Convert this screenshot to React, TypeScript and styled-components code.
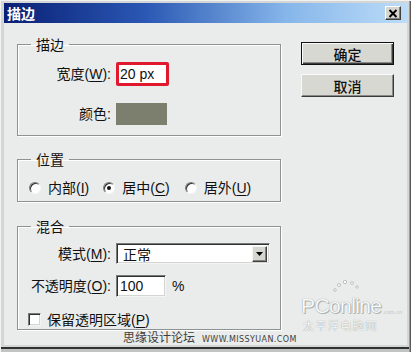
import React from "react";
import styled, { createGlobalStyle } from "styled-components";

const GlobalStyle = createGlobalStyle`
  html, body {
    margin: 0;
    padding: 0;
    background: #d6d9d8;
  }
  body {
    font-family: "Liberation Sans", "Noto Sans CJK SC", sans-serif;
    font-size: 14px;
    color: #111;
  }
`;

const Window = styled.div`
  position: relative;
  width: 411px;
  height: 352px;
  box-sizing: border-box;
  padding: 3px 4px 7px 4px;
  display: flex;
  flex-direction: column;
  background: #d3d6d5;
  box-shadow: inset 1px 1px 0 #f2f2f2, inset -1px 0 0 #5a5a5a, inset -2px 0 0 #9a9c9c,
    inset 0 -3px 0 #c2c4c4, inset 0 -5px 0 #303232;
  overflow: hidden;
`;

const TitleBar = styled.div`
  height: 20px;
  flex: none;
  display: flex;
  align-items: center;
  justify-content: space-between;
  padding: 0 6px 0 3px;
  background: linear-gradient(90deg, #0a1f74 0%, #2a58b4 35%, #86b6ea 70%, #bcdcf8 100%);
`;

const TitleText = styled.span`
  color: #fff;
  font-weight: bold;
  font-size: 14px;
  line-height: 20px;
  font-family: "Noto Sans CJK SC", sans-serif;
`;

const CloseButton = styled.div`
  width: 16px;
  height: 14px;
  box-sizing: border-box;
  display: flex;
  align-items: center;
  justify-content: center;
  background: #d6d6d0;
  border: 1px solid;
  border-color: #fff #404040 #404040 #fff;
  box-shadow: inset -1px -1px 0 #808080;
`;

const Body = styled.div`
  flex: 1;
  display: flex;
  padding: 13px 13px 15px 13px;
  background: #eaeceb;
`;

const LeftColumn = styled.div`
  width: 264px;
  display: flex;
  flex-direction: column;
`;

const RightColumn = styled.div`
  width: 93px;
  margin-left: 20px;
  margin-top: 6px;
  display: flex;
  flex-direction: column;
  gap: 9px;
`;

const Group = styled.fieldset<{ $pt: number; $pb: number; $mt?: number }>`
  margin: ${(p) => p.$mt ?? 0}px 0 0 0;
  padding: ${(p) => p.$pt}px 10px ${(p) => p.$pb}px 10px;
  border: 1px solid #8d9292;
  box-shadow: 1px 1px 0 #fff, inset 1px 1px 0 #fff;
  min-width: 0;
`;

const Legend = styled.legend`
  margin-left: 3px;
  padding: 0 5px;
  line-height: 16px;
  font-family: "Noto Sans CJK SC", sans-serif;
  font-size: 14px;
`;

const FormGrid = styled.div<{ $gap: number }>`
  display: grid;
  grid-template-columns: 83px auto;
  column-gap: 5px;
  row-gap: ${(p) => p.$gap}px;
  align-items: center;
  justify-items: start;
`;

const Label = styled.span`
  justify-self: end;
  white-space: nowrap;
  line-height: 18px;
  u {
    text-decoration-thickness: 1px;
    text-underline-offset: 2px;
  }
`;

const sunken = `
  box-sizing: border-box;
  background: #fff;
  border: 1px solid;
  border-color: #7a7a7a #f4f4f4 #f4f4f4 #7a7a7a;
  box-shadow: inset 1px 1px 0 #303030, inset -1px -1px 0 #d4d4d0;
`;

const HighlightedInput = styled.div`
  width: 53px;
  height: 24px;
  box-sizing: border-box;
  border: 3px solid #e0192e;
  border-radius: 2px;
  background: #fff;
  padding-left: 1px;
  line-height: 18px;
  font-size: 14px;
`;

const Swatch = styled.div`
  width: 51px;
  height: 22px;
  background: #7c7f6e;
`;

const TextInput = styled.div<{ $w: number }>`
  ${sunken}
  width: ${(p) => p.$w}px;
  height: 22px;
  padding-left: 3px;
  line-height: 20px;
`;

const SelectBox = styled.div`
  ${sunken}
  width: 154px;
  height: 21px;
  display: flex;
  align-items: center;
  justify-content: space-between;
  padding: 0 2px 0 6px;
  font-family: "Noto Sans CJK SC", sans-serif;
`;

const SelectArrow = styled.div`
  width: 15px;
  height: 16px;
  box-sizing: border-box;
  display: flex;
  align-items: center;
  justify-content: center;
  background: #d6d6d0;
  border: 1px solid;
  border-color: #f4f4f4 #404040 #404040 #f4f4f4;
  box-shadow: inset -1px -1px 0 #808080;
`;

const InlineRow = styled.div`
  display: flex;
  align-items: center;
  gap: 6px;
`;

const RadioRow = styled.div`
  display: flex;
  align-items: center;
  height: 18px;
  margin-left: 1px;
`;

const RadioItem = styled.label<{ $ml: number }>`
  display: flex;
  align-items: center;
  gap: 7px;
  margin-left: ${(p) => p.$ml}px;
  white-space: nowrap;
  line-height: 18px;
  u {
    text-underline-offset: 2px;
  }
`;

const RadioDot = styled.span<{ $checked?: boolean }>`
  position: relative;
  width: 12px;
  height: 12px;
  box-sizing: border-box;
  border-radius: 50%;
  background: #fff;
  border: 1px solid;
  border-color: #7a7a7a #f6f6f6 #f6f6f6 #7a7a7a;
  box-shadow: inset 1px 1px 0 #303030;
  &::after {
    content: "";
    display: ${(p) => (p.$checked ? "block" : "none")};
    position: absolute;
    left: 3px;
    top: 3px;
    width: 4px;
    height: 4px;
    border-radius: 50%;
    background: #111;
  }
`;

const CheckRow = styled.label`
  display: flex;
  align-items: center;
  gap: 6px;
  height: 16px;
  margin-top: 14px;
  white-space: nowrap;
  u {
    text-underline-offset: 2px;
  }
`;

const CheckBox = styled.span`
  ${sunken}
  width: 13px;
  height: 13px;
`;

const Button = styled.div<{ $default?: boolean }>`
  height: 23px;
  box-sizing: border-box;
  display: flex;
  align-items: center;
  justify-content: center;
  background: #d7d8d1;
  font-family: "Noto Sans CJK SC", sans-serif;
  font-size: 14px;
  font-weight: 500;
  border: 1px solid;
  border-color: ${(p) => (p.$default ? "#111 #111 #111 #111" : "#fafafa #3a3a3a #3a3a3a #fafafa")};
  box-shadow: ${(p) =>
    p.$default
      ? "inset 1px 1px 0 #fafafa, inset -1px -1px 0 #3a3a3a, inset -2px -2px 0 #8a8a8a"
      : "inset -1px -1px 0 #8a8a8a"};
`;

const Watermark = styled.div`
  position: absolute;
  left: 123px;
  top: 329px;
  display: flex;
  align-items: baseline;
  gap: 7px;
  color: #3e3e3e;
  white-space: nowrap;
`;

const WatermarkCn = styled.span`
  font-family: "Noto Sans CJK SC", sans-serif;
  font-size: 12px;
  line-height: 16px;
`;

const WatermarkUrl = styled.span`
  font-family: "DejaVu Sans", sans-serif;
  font-size: 8px;
  letter-spacing: 0.4px;
`;

const LogoMark = styled.div`
  position: absolute;
  left: 301px;
  top: 279px;
  width: 104px;
  display: flex;
  flex-direction: column;
  align-items: flex-start;
  gap: 2px;
  color: #f7f9f9;
  pointer-events: none;
`;

const LogoDots = styled.svg`
  margin-left: 30px;
  height: 14px;
  width: 30px;
`;

const LogoLine = styled.div`
  display: flex;
  align-items: flex-end;
  gap: 1px;
`;

const LogoWord = styled.span`
  font-family: "Liberation Sans", sans-serif;
  font-size: 21px;
  line-height: 22px;
  letter-spacing: -0.6px;
  text-shadow: 0 0 1px #7e8282, 1px 1px 0 #b4b8b8;
`;

const LogoCom = styled.span`
  font-family: "DejaVu Sans", sans-serif;
  font-size: 5px;
  line-height: 9px;
  color: #b8bcbc;
`;

const LogoCn = styled.span`
  font-family: "Noto Sans CJK SC", sans-serif;
  font-size: 11px;
  line-height: 13px;
  letter-spacing: 1.5px;
  margin-left: 2px;
  text-shadow: 0 0 1px #7e8282;
`;

export default function App() {
  return (
    <>
      <GlobalStyle />
      <Window>
        <TitleBar>
          <TitleText>描边</TitleText>
          <CloseButton>
            <svg width="10" height="9" viewBox="0 0 10 9">
              <path d="M1.5 1 L8.5 8 M8.5 1 L1.5 8" stroke="#000" strokeWidth="2" />
            </svg>
          </CloseButton>
        </TitleBar>
        <Body>
          <LeftColumn>
            <Group $pt={10} $pb={10}>
              <Legend>描边</Legend>
              <FormGrid $gap={17}>
                <Label>
                  宽度(<u>W</u>):
                </Label>
                <HighlightedInput>20 px</HighlightedInput>
                <Label>颜色:</Label>
                <Swatch />
              </FormGrid>
            </Group>

            <Group $pt={12} $pb={4} $mt={15}>
              <Legend>位置</Legend>
              <RadioRow>
                <RadioItem $ml={0}>
                  <RadioDot />
                  <span>
                    内部(<u>I</u>)
                  </span>
                </RadioItem>
                <RadioItem $ml={14}>
                  <RadioDot $checked />
                  <span>
                    居中(<u>C</u>)
                  </span>
                </RadioItem>
                <RadioItem $ml={15}>
                  <RadioDot />
                  <span>
                    居外(<u>U</u>)
                  </span>
                </RadioItem>
              </RadioRow>
            </Group>

            <Group $pt={9} $pb={2} $mt={16}>
              <Legend>混合</Legend>
              <FormGrid $gap={11}>
                <Label>
                  模式(<u>M</u>):
                </Label>
                <SelectBox>
                  <span>正常</span>
                  <SelectArrow>
                    <svg width="7" height="4" viewBox="0 0 7 4">
                      <polygon points="0,0 7,0 3.5,4" fill="#000" />
                    </svg>
                  </SelectArrow>
                </SelectBox>
                <Label>
                  不透明度(<u>O</u>):
                </Label>
                <InlineRow>
                  <TextInput $w={50}>100</TextInput>
                  <span>%</span>
                </InlineRow>
              </FormGrid>
              <CheckRow>
                <CheckBox />
                <span>
                  保留透明区域(<u>P</u>)
                </span>
              </CheckRow>
            </Group>
          </LeftColumn>

          <RightColumn>
            <Button $default>确定</Button>
            <Button>取消</Button>
          </RightColumn>
        </Body>

        <LogoMark>
          <LogoDots viewBox="0 0 30 14">
            <circle cx="4" cy="11" r="1.3" fill="#fff" stroke="#9a9e9e" strokeWidth="0.6" />
            <circle cx="8" cy="6" r="1.5" fill="#fff" stroke="#9a9e9e" strokeWidth="0.6" />
            <circle cx="14" cy="3" r="1.7" fill="#fff" stroke="#9a9e9e" strokeWidth="0.6" />
            <circle cx="21" cy="4" r="1.4" fill="#fff" stroke="#9a9e9e" strokeWidth="0.6" />
            <circle cx="26" cy="8" r="1.2" fill="#fff" stroke="#9a9e9e" strokeWidth="0.6" />
          </LogoDots>
          <LogoLine>
            <LogoWord>PConline</LogoWord>
            <LogoCom>.com.cn</LogoCom>
          </LogoLine>
          <LogoCn>太平洋电脑网</LogoCn>
        </LogoMark>
        <Watermark>
          <WatermarkCn>思缘设计论坛</WatermarkCn>
          <WatermarkUrl>WWW.MISSYUAN.COM</WatermarkUrl>
        </Watermark>
      </Window>
    </>
  );
}
